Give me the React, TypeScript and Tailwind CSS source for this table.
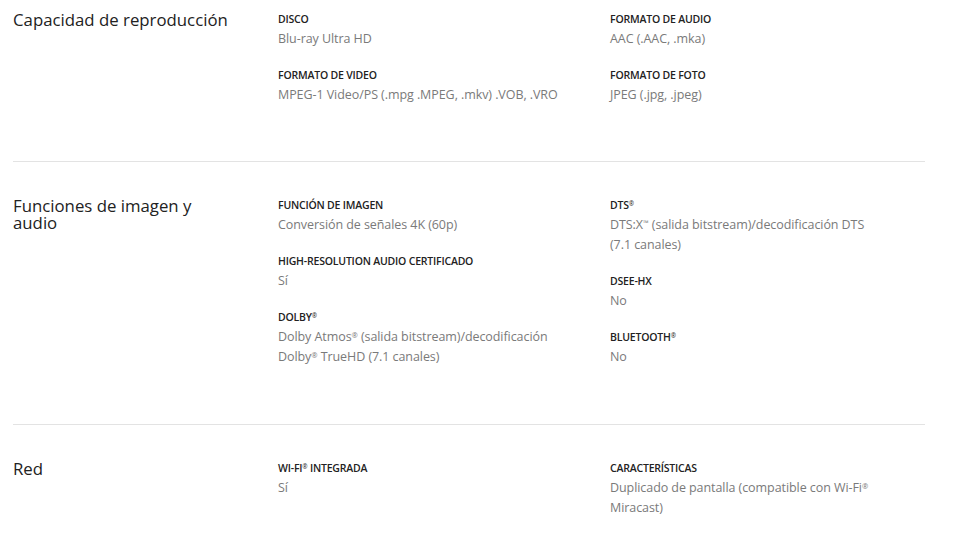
import React from "react";

type Item = { label: string; value: string[] };
type Section = { title: string[]; left: Item[]; right: Item[] };

const sections: Section[] = [
  {
    title: ["Capacidad de reproducción"],
    left: [
      { label: "DISCO", value: ["Blu-ray Ultra HD"] },
      { label: "FORMATO DE VIDEO", value: ["MPEG-1 Video/PS (.mpg .MPEG, .mkv) .VOB, .VRO"] },
    ],
    right: [
      { label: "FORMATO DE AUDIO", value: ["AAC (.AAC, .mka)"] },
      { label: "FORMATO DE FOTO", value: ["JPEG (.jpg, .jpeg)"] },
    ],
  },
  {
    title: ["Funciones de imagen y", "audio"],
    left: [
      { label: "FUNCIÓN DE IMAGEN", value: ["Conversión de señales 4K (60p)"] },
      { label: "HIGH-RESOLUTION AUDIO CERTIFICADO", value: ["Sí"] },
      { label: "DOLBY®", value: ["Dolby Atmos® (salida bitstream)/decodificación", "Dolby® TrueHD (7.1 canales)"] },
    ],
    right: [
      { label: "DTS®", value: ["DTS:X™ (salida bitstream)/decodificación DTS", "(7.1 canales)"] },
      { label: "DSEE-HX", value: ["No"] },
      { label: "BLUETOOTH®", value: ["No"] },
    ],
  },
  {
    title: ["Red"],
    left: [{ label: "WI-FI® INTEGRADA", value: ["Sí"] }],
    right: [
      { label: "CARACTERÍSTICAS", value: ["Duplicado de pantalla (compatible con Wi-Fi®", "Miracast)"] },
    ],
  },
];

function Marks({ text }: { text: string }) {
  const parts = text.split(/([®™])/);
  return (
    <>
      {parts.map((p, i) =>
        p === "®" || p === "™" ? (
          <span key={i} className="text-[0.6em] align-[0.45em] leading-none font-normal">
            {p}
          </span>
        ) : (
          <React.Fragment key={i}>{p}</React.Fragment>
        )
      )}
    </>
  );
}

function Col({ items, className }: { items: Item[]; className?: string }) {
  return (
    <div className={"flex flex-col gap-[17px] " + (className ?? "")}>
      {items.map((it) => (
        <div key={it.label} className="flex flex-col">
          <div className="text-[10.5px] leading-[19px] font-semibold text-[#222222] tracking-[-0.2px]">
            <Marks text={it.label} />
          </div>
          <div className="text-[12.5px] leading-[20px] text-[#7a7a7a] tracking-[-0.07px]">
            {it.value.map((v, i) => (
              <div key={i}>
                <Marks text={v} />
              </div>
            ))}
          </div>
        </div>
      ))}
    </div>
  );
}

export default function App() {
  return (
    <div
      className="w-[960px] h-[540px] overflow-hidden bg-white"
      style={{ fontFamily: '"Open Sans", "Noto Sans", sans-serif' }}
    >
      <div className="mx-[13px] w-[912px]">
        {sections.map((s, idx) => (
          <div
            key={idx}
            className={
              "flex border-b border-[#e3e3e3] " +
              (idx === 0 ? "pt-[10px] pb-[56px]" : "pt-[34px] pb-[57px]")
            }
          >
            <div className="w-[265px] shrink-0 text-[16.8px] leading-[17px] text-[#222222] mt-[1px]">
              {s.title.map((t, i) => (
                <div key={i}>{t}</div>
              ))}
            </div>
            <Col items={s.left} className="w-[332px] shrink-0" />
            <Col items={s.right} className="flex-1" />
          </div>
        ))}
      </div>
    </div>
  );
}
